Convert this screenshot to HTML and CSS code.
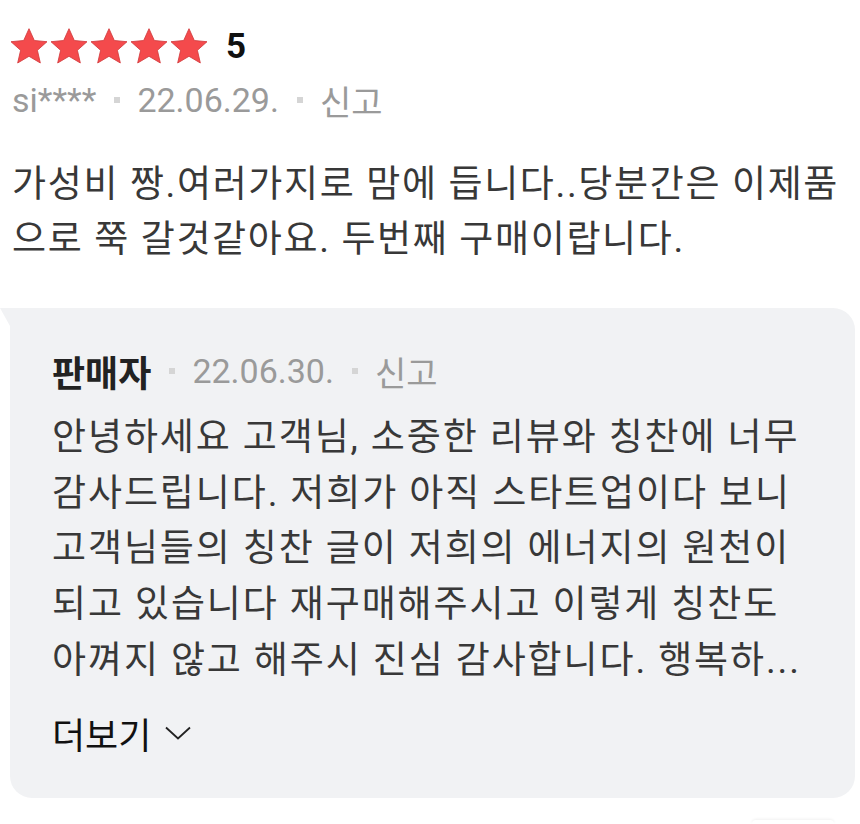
FILE: index.html
```html
<!DOCTYPE html>
<html lang="ko">
<head>
    <meta charset="UTF-8">
    <meta name="viewport" content="width=device-width, initial-scale=1.0">
    <title>리뷰</title>
    <link rel="stylesheet" href="styles.css">
</head>
<body>
    <div class="review">
        <div class="rating">
            <div class="stars">
                <svg class="star" viewBox="1.2 1.4 21.6 21"><path d="M12 1.8l3.1 6.9 7.4.7-5.6 5 1.7 7.4L12 17.9l-6.6 3.9 1.7-7.4-5.6-5 7.4-.7z"/></svg>
                <svg class="star" viewBox="1.2 1.4 21.6 21"><path d="M12 1.8l3.1 6.9 7.4.7-5.6 5 1.7 7.4L12 17.9l-6.6 3.9 1.7-7.4-5.6-5 7.4-.7z"/></svg>
                <svg class="star" viewBox="1.2 1.4 21.6 21"><path d="M12 1.8l3.1 6.9 7.4.7-5.6 5 1.7 7.4L12 17.9l-6.6 3.9 1.7-7.4-5.6-5 7.4-.7z"/></svg>
                <svg class="star" viewBox="1.2 1.4 21.6 21"><path d="M12 1.8l3.1 6.9 7.4.7-5.6 5 1.7 7.4L12 17.9l-6.6 3.9 1.7-7.4-5.6-5 7.4-.7z"/></svg>
                <svg class="star" viewBox="1.2 1.4 21.6 21"><path d="M12 1.8l3.1 6.9 7.4.7-5.6 5 1.7 7.4L12 17.9l-6.6 3.9 1.7-7.4-5.6-5 7.4-.7z"/></svg>
            </div>
            <span class="score">5</span>
        </div>
        <div class="meta">
            <span>si****</span>
            <span class="dot"></span>
            <span>22.06.29.</span>
            <span class="dot"></span>
            <span>신고</span>
        </div>
        <p class="content">
            <span class="line">가성비 짱.여러가지로 맘에 듭니다..당분간은 이제품</span>
            <span class="line">으로 쭉 갈것같아요. 두번째 구매이랍니다.</span>
        </p>

        <div class="reply">
            <div class="meta reply-meta">
                <span class="seller">판매자</span>
                <span class="dot"></span>
                <span>22.06.30.</span>
                <span class="dot"></span>
                <span>신고</span>
            </div>
            <p class="reply-text">
                <span class="line">안녕하세요 고객님, 소중한 리뷰와 칭찬에 너무</span>
                <span class="line">감사드립니다. 저희가 아직 스타트업이다 보니</span>
                <span class="line">고객님들의 칭찬 글이 저희의 에너지의 원천이</span>
                <span class="line">되고 있습니다 재구매해주시고 이렇게 칭찬도</span>
                <span class="line">아껴지 않고 해주시 진심 감사합니다. 행복하...</span>
            </p>
            <button class="more">더보기
                <svg class="chevron" viewBox="0 0 26 14"><path d="M1 1.5l12 11 12-11"/></svg>
            </button>
        </div>
        <div class="next"></div>
    </div>
</body>
</html>
```

FILE: styles.css
```css
body {
    margin: 0;
    background: #fff;
    font-family: Roboto, "Noto Sans CJK KR", sans-serif;
    color: #333;
}
.review {
    padding: 28px 5px 0 10px;
}
.rating {
    display: flex;
    align-items: center;
    height: 36px;
}
.stars {
    display: flex;
    gap: 2px;
}
.star {
    width: 38px;
    height: 36px;
    fill: #f44a4c;
    stroke: #d23c3e;
    stroke-width: 0.5;
    stroke-linejoin: round;
}
.score {
    margin-left: 18px;
    font-size: 35px;
    font-weight: 700;
    color: #111;
}
.meta {
    display: flex;
    align-items: center;
    margin-top: 16px;
    height: 40px;
    font-size: 34px;
    color: #9a9a9a;
    padding-left: 2px;
}
.dot {
    width: 6px;
    height: 6px;
    background: #d5d5d5;
    margin: 0 17px 0 18px;
}
.line {
    display: block;
    white-space: nowrap;
}
.content {
    margin: 37px 0 0 2px;
    font-size: 37px;
    line-height: 55px;
    color: #383838;
    letter-spacing: 1.65px;
}
.reply {
    position: relative;
    margin-top: 41px;
    height: 490px;
    box-sizing: border-box;
    background: #f1f2f4;
    border-radius: 0 22px 22px 22px;
    padding: 41px 20px 0 42px;
}
.reply::before {
    content: "";
    position: absolute;
    left: -10px;
    top: 0;
    border-top: 18px solid #f1f2f4;
    border-left: 10px solid transparent;
}
.reply-meta {
    margin-top: 0;
    padding-left: 0;
    height: 44px;
}
.seller {
    font-size: 36px;
    font-weight: 700;
    color: #222;
}
.reply-text {
    margin: 17px 0 0;
    font-size: 37px;
    line-height: 55.7px;
    color: #383838;
    letter-spacing: 1.9px;
}
.more {
    display: flex;
    align-items: center;
    gap: 14px;
    margin-top: 18px;
    padding: 0;
    border: none;
    background: none;
    font-family: inherit;
    font-size: 36px;
    color: #111;
}
.chevron {
    width: 26px;
    height: 14px;
    fill: none;
    stroke: #222;
    stroke-width: 1.8;
}
.next {
    margin: 22px 0 0 742px;
    width: 82px;
    height: 4px;
    border-radius: 4px 4px 0 0;
    box-shadow: 0 -1px 3px rgba(0, 0, 0, 0.06);
}
```
